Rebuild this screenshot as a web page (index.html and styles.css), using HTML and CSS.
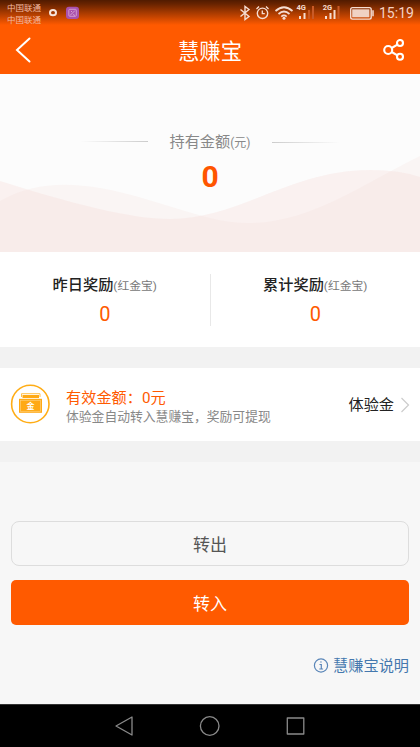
FILE: index.html
```html
<!DOCTYPE html>
<html lang="zh-CN">
<head>
<meta charset="utf-8">
<meta name="viewport" content="width=device-width, initial-scale=1">
<title>慧赚宝</title>
<link rel="stylesheet" href="styles.css">
</head>
<body>
<header class="top">
  <div class="status">
    <div class="carriers"><span>中国联通</span><span>中国联通</span></div>
    <svg class="notices" width="32" height="16" viewBox="0 0 32 16">
      <ellipse cx="5" cy="7.700" rx="3" ry="2.600" fill="none" stroke="#f7e5dc" stroke-width="2"/>
      <rect x="18" y="1.700" width="13" height="12.300" rx="3" fill="#a951ad"/>
      <rect x="20.800" y="4.300" width="7.500" height="7" rx="1" fill="none" stroke="#d7a0d2" stroke-width=".9"/>
      <path d="M22 10.500l5-5M23 6.500h1M25 9.500l2 1" stroke="#d7a0d2" fill="none"/>
    </svg>
    <svg class="signals" width="136" height="24" viewBox="239 0 136 24" fill="none" stroke="#f5ddd2">
      <path d="M240.500 9.500l8.500 7-4 3V6.500l4 3-8.500 7" stroke-width="1.400"/>
      <circle cx="262.500" cy="13.300" r="5.200" stroke-width="1.400"/>
      <path d="M262.300 10.500v3.200h2.500M256.500 9l2.500-2.500M266 6.500l2.500 2.500" stroke-width="1.300"/>
      <path d="M275.500 11q8.500-7.500 17 0M278.500 14q5.500-5 11 0M281.300 16.600q2.700-2.300 5.400 0" stroke-width="1.700"/>
      <circle cx="284" cy="18.300" r="1.500" fill="#f5ddd2" stroke="none"/>
      <g stroke-width="2">
        <path d="M300 16v3M304.500 13v6M326 16v3M330.500 13v6M334.500 10v9"/>
        <path d="M309 10v9M313 6v13M338.500 6v13" stroke="#c95a26"/>
      </g>
      <rect x="350.700" y="7.600" width="20.500" height="11.500" rx="1.800" stroke-width="1.400"/>
      <rect x="352.200" y="9.300" width="17.200" height="8" fill="#f0d2c4" stroke="none"/>
      <path d="M373 10.300v6" stroke-width="1.500"/>
      <g class="net" fill="#f5ddd2" stroke="none"><text x="296.500" y="9.800">4G</text><text x="322.700" y="9.800">2G</text></g>
    </svg>
    <time class="clock">15:19</time>
  </div>
  <div class="titlebar">
    <svg width="18" height="26" viewBox="0 0 18 26" fill="none" stroke="#fff" stroke-width="2" stroke-linecap="round"><path d="M14.500 1.500L2 13l12.500 11.500"/></svg>
    <h1>慧赚宝</h1>
    <svg width="22" height="22" viewBox="0 0 22 22" fill="none" stroke="#fff" stroke-width="2.100"><circle cx="5.200" cy="11" r="4"/><circle cx="17" cy="4" r="3"/><circle cx="17" cy="17.800" r="3"/><path d="M8.700 9l5.700-3.300M8.700 13l5.700 3.300"/></svg>
  </div>
</header>
<main>
  <section class="hero">
    <svg class="waves" width="420" height="100" viewBox="0 152 420 100">
      <path d="M0 201C65 163 145 201 210 218C290 239 350 190 420 156V252H0Z" fill="#f3dcd8" fill-opacity=".2"/>
      <path d="M0 181C70 203 130 219 170 219C240 219 290 170 370 170Q400 170 420 177V252H0Z" fill="#f5d8d5" fill-opacity=".31"/>
    </svg>
    <div class="held"><i class="rule left"></i><p>持有金额<small>(元)</small></p><i class="rule right"></i></div>
    <strong>0</strong>
  </section>
  <section class="rewards">
    <div class="reward"><h2>昨日奖励<small>(红金宝)</small></h2><b>0</b></div>
    <div class="reward"><h2>累计奖励<small>(红金宝)</small></h2><b>0</b></div>
  </section>
  <section class="trial">
    <svg class="purse" width="40" height="40" viewBox="0 0 40 40">
      <circle cx="20.300" cy="20" r="18.700" fill="#fff" stroke="#ffad16" stroke-width="1.600"/>
      <path d="M11.500 13V9.700h18.500V13" fill="none" stroke="#ffbf4a"/>
      <path d="M12.500 11h16.500v3h-16.500z" fill="#ffa915"/>
      <rect x="9" y="14.800" width="23" height="14" fill="#ffa915"/>
      <rect x="10.500" y="16.300" width="20" height="11" fill="none" stroke="#ffd07a" stroke-width=".7"/>
      <text class="seal" x="20.500" y="24.700" text-anchor="middle" fill="#fff">金</text>
    </svg>
    <div class="trial-text"><p class="amount">有效金额：0元</p><p class="note">体验金自动转入慧赚宝，奖励可提现</p></div>
    <span class="trial-link">体验金</span>
    <svg width="10" height="18" viewBox="0 0 10 18" fill="none" stroke="#ccc" stroke-width="1.200"><path d="M1.500 2l7 7-7 7"/></svg>
  </section>
  <section class="actions">
    <button class="out">转出</button>
    <button class="in">转入</button>
    <a class="help"><svg width="16" height="16" viewBox="0 0 16 16" fill="none" stroke="#5a86b8"><circle cx="8" cy="7.500" r="6.600" stroke-width="1.200"/><path d="M6.500 6.500h1.800v4.500M6.300 11h3.800M7.200 4h1.500" stroke-width="1.200"/></svg>慧赚宝说明</a>
  </section>
</main>
<nav class="keys">
  <svg width="20" height="22" viewBox="0 0 20 22"><path d="M18 2v18L2 11z"/></svg>
  <svg width="22" height="22" viewBox="0 0 22 22"><circle cx="10.700" cy="11" r="9.300"/></svg>
  <svg width="20" height="22" viewBox="0 0 20 22"><rect x="1.300" y="3" width="16.500" height="16"/></svg>
</nav>
</body>
</html>
```
FILE: styles.css
```css
* { box-sizing: border-box; }
body { margin: 0; width: 420px; height: 747px; overflow: hidden; display: flex; flex-direction: column; background: #f7f7f7; font-family: Roboto, "Noto Sans CJK SC", sans-serif; }
h1, h2, p { margin: 0; font-weight: 400; }
svg { display: block; flex: none; }

.top { height: 74px; flex: none; color: #fff; background: linear-gradient(#511b00, #682300 4px, #ff5a00 25px); }
.status { height: 26px; display: flex; align-items: flex-start; padding-left: 7px; }
.carriers { display: flex; flex-direction: column; width: 41px; padding-top: 3px; font-size: 8.500px; line-height: 11.500px; color: #f1b9a0; white-space: nowrap; }
.notices { margin-top: 5px; }
.signals { margin-left: 159px; }
.net { font: bold 7.500px Roboto, sans-serif; }
.clock { margin-left: 4px; padding-top: 5px; font-size: 14px; line-height: 17px; color: #f5d3c4; }
.titlebar { height: 48px; display: flex; align-items: center; justify-content: space-between; padding: 0 15px 0 15px; }
.titlebar h1 { font-size: 21.300px; line-height: 30px; padding: 3px 0 0 4px; }

.hero { position: relative; height: 178px; background: #fcfcfc; text-align: center; padding-top: 57px; }
.waves { position: absolute; left: 0; bottom: 0; }
.held { position: relative; display: flex; align-items: center; justify-content: center; gap: 21px; height: 22px; color: #888; font-size: 15.200px; line-height: 22px; }
.held small { font-size: 12px; }
.rule { width: 68px; height: 1px; }
.rule.left { background: linear-gradient(90deg, transparent, #ccc); margin-bottom: 2px; }
.rule.right { background: linear-gradient(90deg, #ccc, transparent); }
.hero strong { position: relative; display: block; margin-top: 6px; font-size: 30px; line-height: 35px; color: #ff5500; }

.rewards { display: flex; height: 95px; padding-top: 22px; background: #fff; }
.reward { flex: 1; height: 52px; text-align: center; }
.reward + .reward { border-left: 1px solid #e8e8e8; }
.reward h2 { font-size: 15.200px; line-height: 22px; font-weight: 500; color: #222; }
.reward h2 small { font-size: 11.800px; font-weight: 400; color: #777; }
.reward b { display: block; margin-top: 5px; font-size: 20px; line-height: 24px; font-weight: 400; color: #ff5a00; }

.trial { display: flex; align-items: center; height: 115px; padding: 0 10px; background: #fff; border: solid #f2f2f2; border-width: 21px 0; }
.purse { margin-bottom: 1px; }
.trial-text { margin-left: 16px; padding-top: 4px; flex: 1; }
.amount { font-size: 15.200px; line-height: 20px; color: #ff5a00; }
.note { font-size: 12.800px; line-height: 18px; color: #888; }
.trial-link { font-size: 15.200px; line-height: 22px; color: #222; margin-right: 6px; padding-top: 1px; }

.actions { display: flex; flex-direction: column; padding: 59px 11px 0; }
.actions button { height: 45px; border-radius: 8px; font: 17px/24px Roboto, "Noto Sans CJK SC", sans-serif; padding: 2px 0 0; }
.actions .out { border: 1px solid #ddd; background: #f7f7f7; color: #555; }
.actions .in { margin-top: 14px; border: 0; border-radius: 5px; background: #ff5a00; color: #fff; }
.help { align-self: flex-end; display: flex; align-items: center; gap: 4px; margin-top: 30px; font-size: 15.200px; line-height: 22px; color: #4478ae; }

.keys { height: 43px; margin-top: auto; display: flex; align-items: center; justify-content: center; gap: 65px; background: #000; border-top: 1px solid #333; }
.keys svg { fill: none; stroke: #8a8a8a; stroke-width: 1.300; stroke-linejoin: round; }
.seal { font: bold 8px "Noto Sans CJK SC", sans-serif; }
```
